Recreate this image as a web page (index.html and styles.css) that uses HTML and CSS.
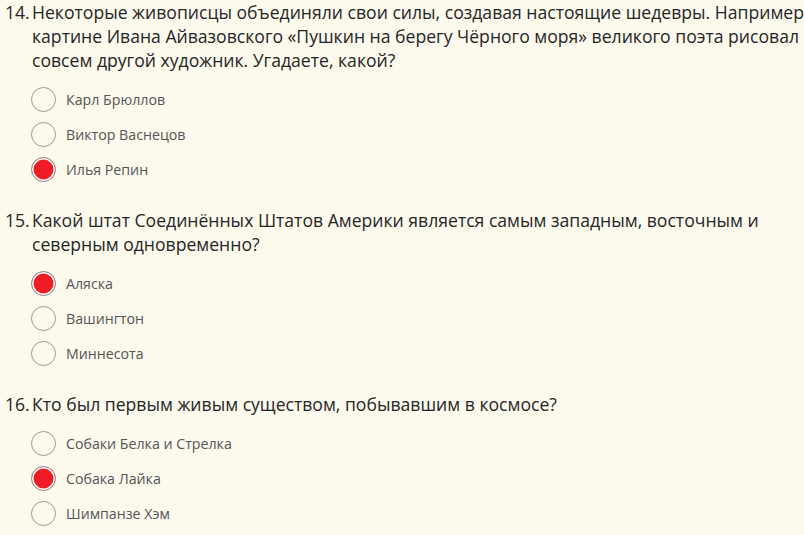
FILE: index.html
```html
<!DOCTYPE html>
<html>
<head>
  <title>Викторина</title>
  <meta name="viewport" content="width=device-width, initial-scale=1.0">
  <link rel="stylesheet" href="styles.css">
</head>
<body>
  <div class="quiz">

    <div class="question">
      <div class="q-title">
        <span class="q-num">14.</span>
        <span class="q-text">Некоторые живописцы объединяли свои силы, создавая настоящие шедевры. Например картине Ивана Айвазовского «Пушкин на берегу Чёрного моря» великого поэта рисовал совсем другой художник. Угадаете, какой?</span>
      </div>
      <div class="options">
        <label class="option"><input type="radio" name="q14"> Карл Брюллов</label>
        <label class="option"><input type="radio" name="q14"> Виктор Васнецов</label>
        <label class="option"><input type="radio" name="q14" checked> Илья Репин</label>
      </div>
    </div>

    <div class="question">
      <div class="q-title">
        <span class="q-num">15.</span>
        <span class="q-text">Какой штат Соединённых Штатов Америки является самым западным, восточным и северным одновременно?</span>
      </div>
      <div class="options">
        <label class="option"><input type="radio" name="q15" checked> Аляска</label>
        <label class="option"><input type="radio" name="q15"> Вашингтон</label>
        <label class="option"><input type="radio" name="q15"> Миннесота</label>
      </div>
    </div>

    <div class="question">
      <div class="q-title">
        <span class="q-num">16.</span>
        <span class="q-text">Кто был первым живым существом, побывавшим в космосе?</span>
      </div>
      <div class="options">
        <label class="option"><input type="radio" name="q16"> Собаки Белка и Стрелка</label>
        <label class="option"><input type="radio" name="q16" checked> Собака Лайка</label>
        <label class="option"><input type="radio" name="q16"> Шимпанзе Хэм</label>
      </div>
    </div>

  </div>
</body>
</html>
```

FILE: styles.css
```css
* {
  box-sizing: border-box;
  margin: 0;
  padding: 0;
  font-family: "Open Sans", Arial, sans-serif;
}

html {
  overflow: hidden;
}

body {
  background-color: #fcf9ed;
  color: #262626;
}

.quiz {
  width: 830px;
}

.question {
  margin-bottom: 21px;
}

/* Question title */
.q-title {
  display: flex;
  padding-left: 5px;
  font-size: 17.6px;
  line-height: 24px;
}

.q-num {
  flex: 0 0 27px;
}

.q-text {
  width: 785px;
}

/* Answers */
.options {
  margin-top: 10px;
  padding-left: 31px;
}

.option {
  display: flex;
  align-items: center;
  gap: 10px;
  height: 35px;
  font-size: 14.2px;
  color: #555;
  cursor: pointer;
}

.option input {
  appearance: none;
  -webkit-appearance: none;
  width: 25px;
  height: 25px;
  border-radius: 50%;
  border: 1.5px solid #9a9a9a;
  background-color: transparent;
  cursor: pointer;
}

.option input:checked {
  background-color: #ee1c25;
  box-shadow: inset 0 0 0 1.5px #fff;
}
```
